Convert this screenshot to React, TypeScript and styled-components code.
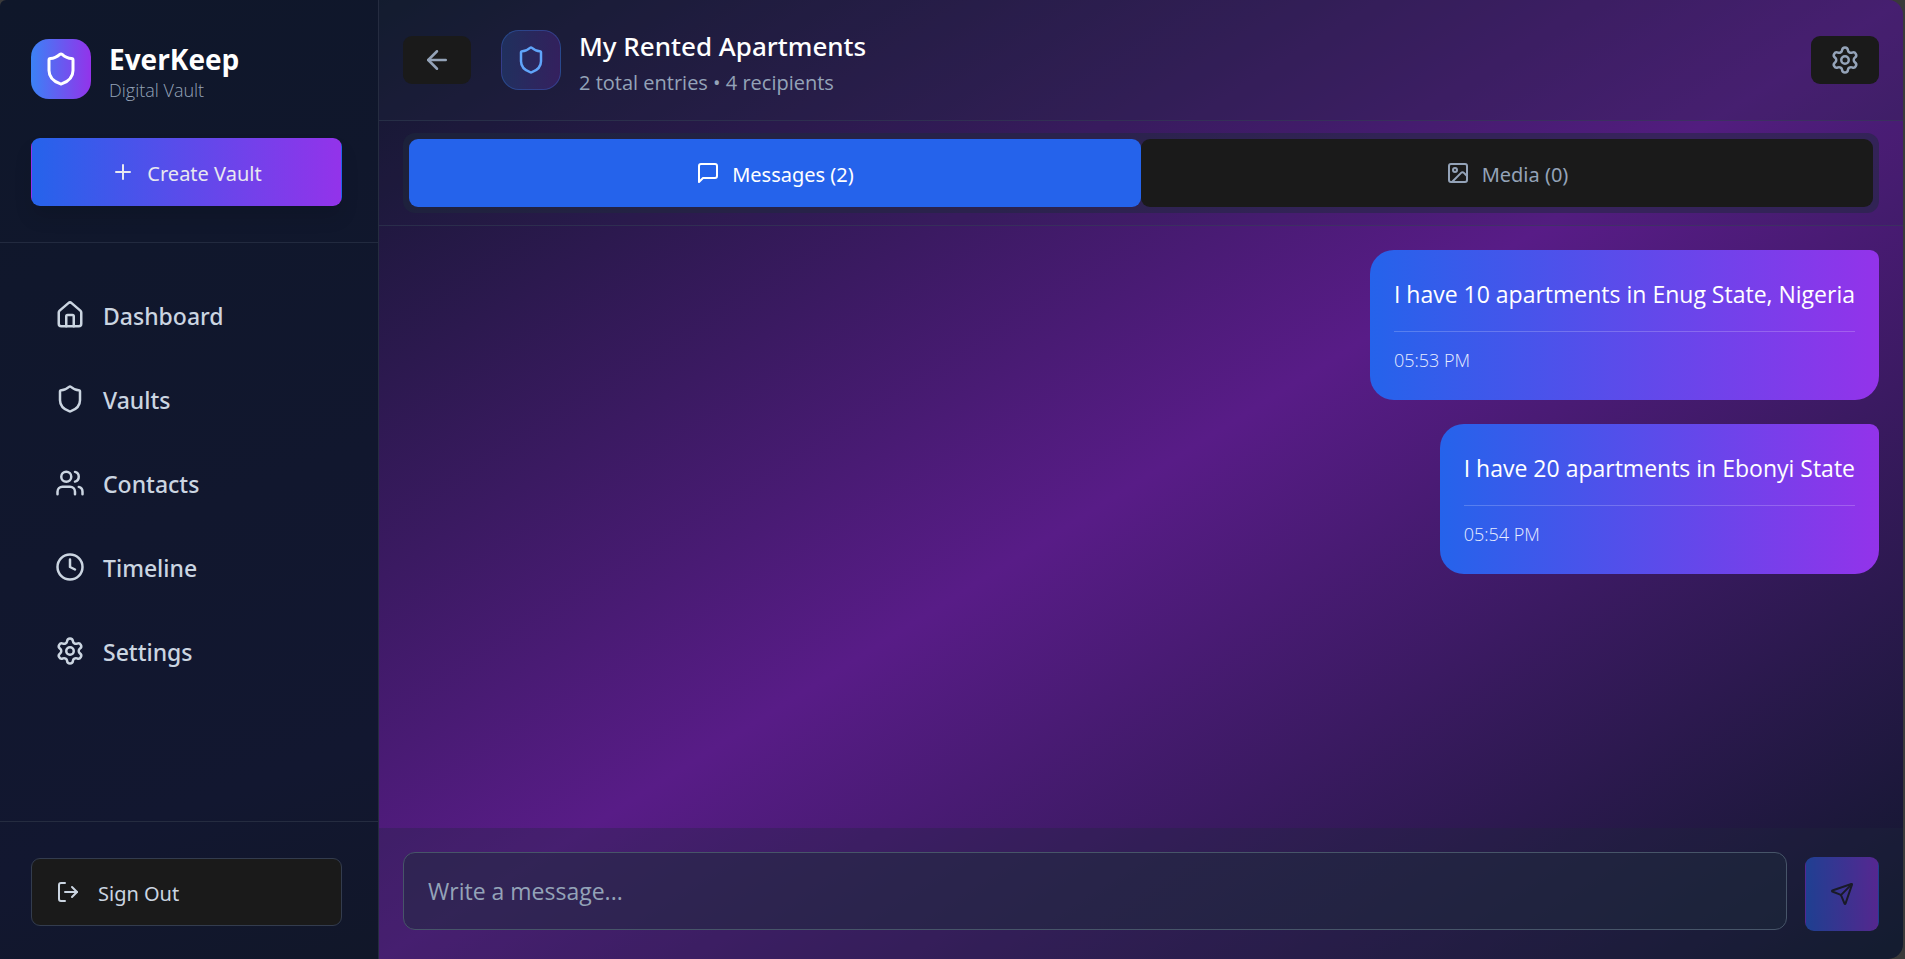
import React, { useState } from "react";
import styled, { createGlobalStyle } from "styled-components";
import {
  ArrowLeft,
  Clock,
  House,
  Image as ImageIcon,
  LogOut,
  Plus,
  Send,
  Settings,
  Shield,
  Users,
} from "lucide-react";

const GlobalStyle = createGlobalStyle`
  *, *::before, *::after { box-sizing: border-box; }
  body {
    margin: 0;
    background: #3a3a3a;
    color: #fff;
    font-family: "Open Sans", "Noto Sans", sans-serif;
    font-size: 23px;
  }
  button, input { font-family: inherit; margin: 0; }
  h1, h2, p { margin: 0; }
`;

const Frame = styled.div`
  display: flex;
  height: 100vh;
  margin-right: 2px;
  border-radius: 6px 15px 15px 0;
  overflow: hidden;
`;

const Sidebar = styled.aside`
  display: flex;
  flex-direction: column;
  flex: 0 0 379px;
  border-right: 1px solid #252c40;
  background: linear-gradient(160deg, #0f172a, #121730 80%, #111729);
`;

const SidebarTop = styled.div`
  padding: 39px 36px 36px 31px;
  border-bottom: 1px solid #222a3f;
`;

const Brand = styled.div`
  display: flex;
  align-items: center;
  gap: 18px;
  height: 60px;
  margin-bottom: 39px;
`;

const Logo = styled.div`
  display: grid;
  place-items: center;
  width: 60px;
  height: 60px;
  border-radius: 18px;
  background: linear-gradient(90deg, #3b82f6, #9333ea);
`;

const BrandText = styled.div`
  padding-top: 4px;
`;

const BrandName = styled.h1`
  font-size: 28px;
  line-height: 38px;
  font-weight: 700;
`;

const BrandNote = styled.p`
  font-size: 18px;
  line-height: 24px;
  font-weight: 300;
  color: #94a3b8;
`;

const Label = styled.span`
  padding-top: 2px;
`;

const Button = styled.button`
  display: flex;
  align-items: center;
  justify-content: center;
  height: 68px;
  padding: 0;
  border: 1px solid transparent;
  border-radius: 9px;
  background-color: #1a1a1a;
  color: #94a3b8;
  font-family: "Noto Sans", "Open Sans", sans-serif;
  font-size: 20px;
  line-height: 30px;
  cursor: pointer;

  ${Label} { padding-top: 4px; }
`;

const CreateButton = styled(Button)`
  width: 100%;
  gap: 12px;
  background: linear-gradient(90deg, #2563eb, #9333ea);
  color: #e8e8f0;
  box-shadow: 0 12px 18px rgba(0, 0, 0, 0.1);
`;

const Nav = styled.nav`
  display: flex;
  flex-direction: column;
  flex: 1;
  gap: 12px;
  padding: 36px 36px 36px 31px;
`;

const NavLink = styled.a`
  display: flex;
  align-items: center;
  gap: 18px;
  height: 72px;
  padding: 0 24px;
  border-radius: 12px;
  color: #cbd5e1;
  font-family: "Noto Sans", "Open Sans", sans-serif;
  font-size: 23px;
  font-weight: 500;
  text-decoration: none;
`;

const SidebarBottom = styled.div`
  padding: 36px 36px 33px 31px;
  border-top: 1px solid #252c40;
`;

const SignOutButton = styled(Button)`
  width: 100%;
  justify-content: flex-start;
  gap: 18px;
  padding: 0 24px;
  border-color: #333c4e;
  color: #cbd5e1;
`;

const Main = styled.main`
  display: flex;
  flex-direction: column;
  flex: 1;
  min-width: 0;
  background: linear-gradient(to bottom right, #0f172a, #581c87, #0f172a);
`;

const Header = styled.header`
  display: flex;
  align-items: center;
  height: 121px;
  padding: 0 24px;
  border-bottom: 1px solid rgba(51, 65, 85, 0.5);
  background: rgba(30, 41, 59, 0.3);
`;

const IconButton = styled(Button)`
  width: 68px;
  height: 48px;
`;

const VaultBadge = styled.div`
  display: grid;
  place-items: center;
  width: 60px;
  height: 60px;
  margin: 0 18px 0 30px;
  border: 1px solid rgba(59, 130, 246, 0.3);
  border-radius: 18px;
  background: linear-gradient(90deg, rgba(59, 130, 246, 0.2), rgba(147, 51, 234, 0.2));
  color: #60a5fa;
`;

const VaultText = styled.div`
  flex: 1;
  padding-top: 8px;
`;

const VaultTitle = styled.h2`
  font-family: "Noto Sans", "Open Sans", sans-serif;
  font-size: 26px;
  line-height: 38px;
  font-weight: 500;
`;

const VaultMeta = styled.p`
  font-size: 20px;
  line-height: 36px;
  color: #94a3b8;
`;

const TabStrip = styled.div`
  padding: 12px 24px;
  border-bottom: 1px solid rgba(51, 65, 85, 0.5);
  background: rgba(30, 41, 59, 0.1);
`;

const TabList = styled.div`
  display: flex;
  padding: 6px;
  border-radius: 12px;
  background: rgba(30, 41, 59, 0.5);
`;

const Tab = styled(Button)<{ $active: boolean }>`
  flex: 1;
  gap: 12px;
  background-color: ${(p) => (p.$active ? "#2563eb" : "#1a1a1a")};
  color: ${(p) => (p.$active ? "#fff" : "#94a3b8")};
`;

const Conversation = styled.section`
  display: flex;
  flex-direction: column;
  align-items: flex-end;
  flex: 1;
  gap: 24px;
  min-height: 0;
  padding: 24px;
  overflow: hidden;
`;

const Bubble = styled.article`
  height: 150px;
  padding: 25px 24px 23px;
  border-radius: 24px 9px 24px 24px;
  background: linear-gradient(90deg, #2563eb, #9333ea);
`;

const BubbleText = styled.p`
  padding-bottom: 17px;
  border-bottom: 1px solid rgba(255, 255, 255, 0.2);
  font-size: 23px;
  line-height: 39px;
`;

const BubbleTime = styled.time`
  display: block;
  padding-top: 16px;
  font-size: 18px;
  line-height: 24px;
  font-weight: 300;
  color: #e8edff;
`;

const Composer = styled.form`
  display: flex;
  align-items: center;
  gap: 18px;
  height: 131px;
  padding: 0 24px 6px;
  background: rgba(30, 41, 59, 0.3);
`;

const MessageInput = styled.input`
  flex: 1;
  min-width: 0;
  height: 78px;
  padding: 0 24px;
  border: 1px solid #475569;
  border-radius: 12px;
  background: rgba(30, 41, 59, 0.5);
  color: #fff;
  font-size: 23px;
  outline: none;
  &::placeholder { color: #94a3b8; opacity: 1; }
`;

const SendButton = styled(Button)`
  width: 74px;
  height: 74px;
  margin-top: 6px;
  background: linear-gradient(90deg, #2563eb, #9333ea);
  color: #1a1a1a;
  opacity: 0.5;
`;

function MessageIcon() {
  return (
    <svg
      width="24"
      height="24"
      viewBox="0 0 24 24"
      fill="none"
      stroke="currentColor"
      strokeWidth="2"
      strokeLinecap="round"
      strokeLinejoin="round"
      aria-hidden="true"
    >
      <path d="M21 15a2 2 0 0 1-2 2H7l-4 4V5a2 2 0 0 1 2-2h14a2 2 0 0 1 2 2z" />
    </svg>
  );
}

const links = [
  { label: "Dashboard", Icon: House },
  { label: "Vaults", Icon: Shield },
  { label: "Contacts", Icon: Users },
  { label: "Timeline", Icon: Clock },
  { label: "Settings", Icon: Settings },
];

const messages = [
  { text: "I have 10 apartments in Enug State, Nigeria", time: "05:53 PM" },
  { text: "I have 20 apartments in Ebonyi State", time: "05:54 PM" },
];

export default function App() {
  const [tab, setTab] = useState<"messages" | "media">("messages");
  const [draft, setDraft] = useState("");

  return (
    <>
      <GlobalStyle />
      <Frame>
        <Sidebar>
          <SidebarTop>
            <Brand>
              <Logo><Shield size={36} /></Logo>
              <BrandText>
                <BrandName>EverKeep</BrandName>
                <BrandNote>Digital Vault</BrandNote>
              </BrandText>
            </Brand>
            <CreateButton type="button"><Plus size={24} /><Label>Create Vault</Label></CreateButton>
          </SidebarTop>
          <Nav>
            {links.map(({ label, Icon }) => (
              <NavLink key={label} href="#"><Icon size={30} /><Label>{label}</Label></NavLink>
            ))}
          </Nav>
          <SidebarBottom>
            <SignOutButton type="button"><LogOut size={24} /><Label>Sign Out</Label></SignOutButton>
          </SidebarBottom>
        </Sidebar>
        <Main>
          <Header>
            <IconButton type="button" aria-label="Back"><ArrowLeft size={30} /></IconButton>
            <VaultBadge><Shield size={30} /></VaultBadge>
            <VaultText>
              <VaultTitle>My Rented Apartments</VaultTitle>
              <VaultMeta>2 total entries • 4 recipients</VaultMeta>
            </VaultText>
            <IconButton type="button" aria-label="Vault settings"><Settings size={30} /></IconButton>
          </Header>
          <TabStrip>
            <TabList role="tablist">
              <Tab type="button" role="tab" aria-selected={tab === "messages"} $active={tab === "messages"} onClick={() => setTab("messages")}>
                <MessageIcon /><Label>Messages (2)</Label>
              </Tab>
              <Tab type="button" role="tab" aria-selected={tab === "media"} $active={tab === "media"} onClick={() => setTab("media")}>
                <ImageIcon size={24} /><Label>Media (0)</Label>
              </Tab>
            </TabList>
          </TabStrip>
          <Conversation>
            {tab === "messages" && messages.map((m) => (
              <Bubble key={m.time}>
                <BubbleText>{m.text}</BubbleText>
                <BubbleTime>{m.time}</BubbleTime>
              </Bubble>
            ))}
          </Conversation>
          <Composer onSubmit={(e: React.FormEvent) => e.preventDefault()}>
            <MessageInput
              type="text"
              aria-label="Message"
              placeholder="Write a message..."
              value={draft}
              onChange={(e) => setDraft(e.target.value)}
            />
            <SendButton type="submit" aria-label="Send" disabled={!draft}><Send size={24} /></SendButton>
          </Composer>
        </Main>
      </Frame>
    </>
  );
}
